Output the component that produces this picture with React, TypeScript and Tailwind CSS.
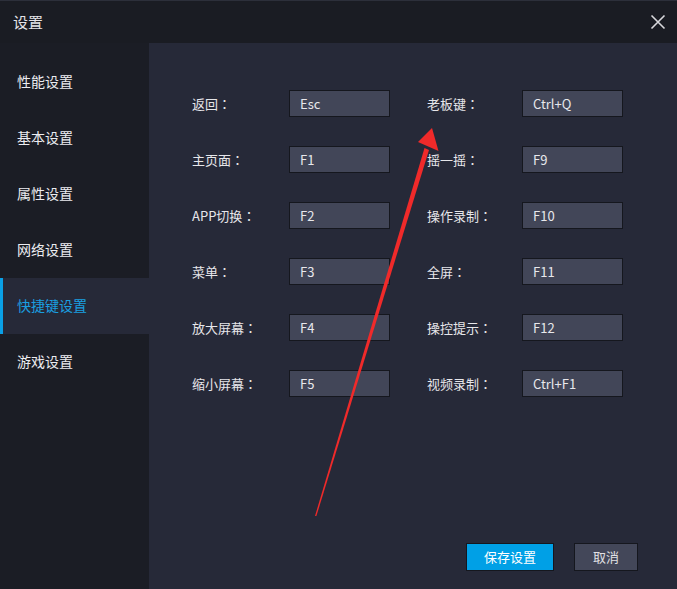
import React from "react";

const menu = ["性能设置", "基本设置", "属性设置", "网络设置", "快捷键设置", "游戏设置"];

const rows: [string, string, string, string][] = [
  ["返回", "Esc", "老板键", "Ctrl+Q"],
  ["主页面", "F1", "摇一摇", "F9"],
  ["APP切换", "F2", "操作录制", "F10"],
  ["菜单", "F3", "全屏", "F11"],
  ["放大屏幕", "F4", "操控提示", "F12"],
  ["缩小屏幕", "F5", "视频录制", "Ctrl+F1"],
];

function KeyBox({ value }: { value: string }) {
  return (
    <div className="w-[101px] h-[27px] bg-[#424658] border border-[#15171e] flex items-center pl-[10px] text-[13px] text-[#e8e8ec]">
      {value}
    </div>
  );
}

function Label({ text, width, className = "" }: { text: string; width: string; className?: string }) {
  return (
    <span className={`${width} ${className} text-[13px] text-[#e6e6ea] flex items-center`}>
      {text}
      <span style={{ fontFamily: '"Noto Sans CJK TC", sans-serif' }}>：</span>
    </span>
  );
}

export default function App() {
  return (
    <div
      className="w-[677px] h-[589px] flex flex-col bg-[#262938] overflow-hidden"
      style={{ fontFamily: '"Noto Sans CJK SC", "Liberation Sans", sans-serif' }}
    >
      <div className="h-[43px] shrink-0 bg-[#1a1c23] border-t border-[#2c2f3a] flex items-center justify-between pl-[13px] pr-[11px]">
        <span className="text-[15px] text-[#e4e4e8]">设置</span>
        <svg width="16" height="16" viewBox="0 0 16 16" className="text-[#d8d8dc]">
          <path d="M1.5 1.5 L14.5 14.5 M14.5 1.5 L1.5 14.5" stroke="currentColor" strokeWidth="1.6" />
        </svg>
      </div>
      <div className="flex flex-1">
        <div className="w-[149px] shrink-0 bg-[#1b1d25] pt-[11px]">
          {menu.map((m) => {
            const active = m === "快捷键设置";
            return (
              <div
                key={m}
                className={
                  active
                    ? "h-[56px] flex items-center pl-[14px] pb-[2px] border-l-[3px] border-[#0aa0e6] bg-[#262938] text-[14px] text-[#1a9fe0]"
                    : "h-[56px] flex items-center pl-[17px] pb-[2px] text-[14px] text-[#ececf0]"
                }
              >
                {m}
              </div>
            );
          })}
        </div>
        <div className="relative flex-1 flex flex-col pl-[43px] pt-[47px] pr-[39px] pb-[18px]">
          <div className="flex flex-col gap-[29px]">
            {rows.map(([l1, v1, l2, v2]) => (
              <div key={l1} className="flex items-center">
                <Label text={l1} width="w-[97px]" />
                <KeyBox value={v1} />
                <Label text={l2} width="w-[95px]" className="ml-[37px]" />
                <KeyBox value={v2} />
              </div>
            ))}
          </div>
          <div className="mt-auto flex justify-end gap-[20px]">
            <button className="w-[88px] h-[28px] bg-[#00a0e6] border border-[#15171e] text-[13px] text-white">
              保存设置
            </button>
            <button className="w-[64px] h-[28px] bg-[#434759] border border-[#15171e] text-[13px] text-[#e0e0e4]">
              取消
            </button>
          </div>
          <svg
            className="absolute left-0 top-0 pointer-events-none"
            width="528"
            height="546"
            viewBox="149 43 528 546"
          >
            <polygon points="315,516 316.4,516 429,150 424.5,148" fill="#f02a2a" />
            <polygon points="432,128 438.5,151 418,142" fill="#f02a2a" />
          </svg>
        </div>
      </div>
    </div>
  );
}
